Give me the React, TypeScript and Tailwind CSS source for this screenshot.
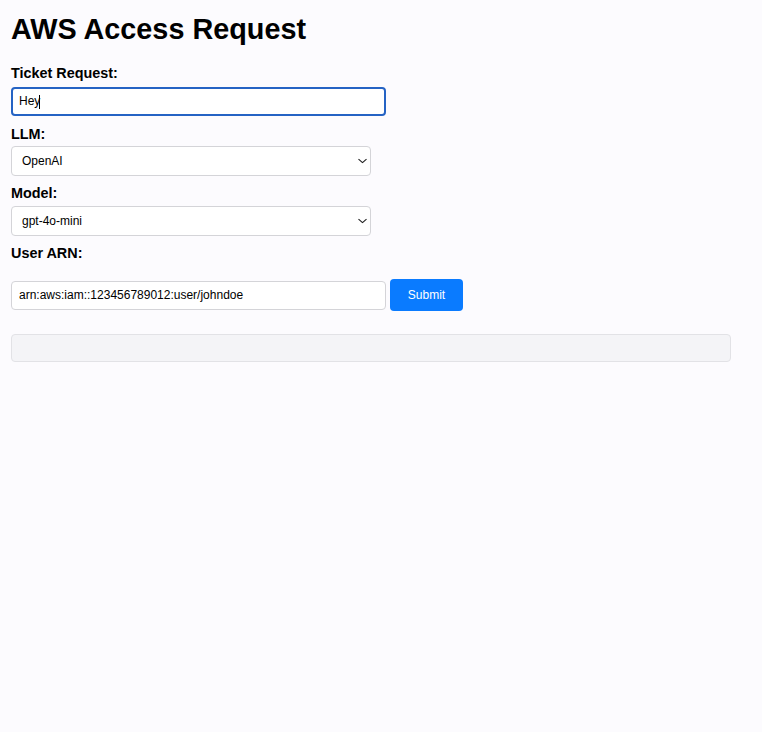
import React from 'react';

const Chevron = () => (
  <svg
    className="pointer-events-none absolute right-[4px] top-1/2 -translate-y-1/2"
    width="9"
    height="5"
    viewBox="0 0 9 5"
    fill="none"
  >
    <path d="M0.8 0.8l3.7 3.4 3.7-3.4" stroke="#222" strokeWidth="1.1" strokeLinecap="round" strokeLinejoin="round" />
  </svg>
);

const Label = ({ children, className = '' }: { children: React.ReactNode; className?: string }) => (
  <label className={`block h-[17px] text-[14.4px] leading-[17px] font-bold text-black ${className}`}>{children}</label>
);

const Select = ({ value, options, className = '' }: { value: string; options: string[]; className?: string }) => (
  <div className={`relative w-[360px] ${className}`}>
    <select
      defaultValue={value}
      className="block h-[30px] w-full appearance-none rounded-[4px] border border-[#d4d4d8] bg-white pl-[10px] pr-6 text-[12px] text-black outline-none"
    >
      {options.map((o) => (
        <option key={o}>{o}</option>
      ))}
    </select>
    <Chevron />
  </div>
);

export default function App() {
  return (
    <div className="min-h-screen bg-[#fcfbfe] px-[11px] pt-[13px] font-['Liberation_Sans',Arial,sans-serif] text-black">
      <h1 className="h-[33px] text-[28.8px] leading-[33px] font-bold">AWS Access Request</h1>

      {/* Ticket */}
      <Label className="mt-[18.5px]">Ticket Request:</Label>
      <div className="relative mt-[5px] w-[375px]">
        <input
          defaultValue="Hey"
          className="block h-[29px] w-full rounded-[4px] border-2 border-[#2563c4] bg-white px-[6px] text-[12px] text-black outline-none"
        />
        <span className="pointer-events-none absolute left-[28px] top-[8px] h-[14px] w-px bg-black" />
      </div>

      {/* LLM */}
      <Label className="mt-[10.5px]">LLM:</Label>
      <Select className="mt-[2.5px]" value="OpenAI" options={['OpenAI', 'Anthropic']} />

      {/* Model */}
      <Label className="mt-[9px]">Model:</Label>
      <Select className="mt-[4px]" value="gpt-4o-mini" options={['gpt-4o-mini', 'gpt-4o']} />

      {/* User ARN */}
      <Label className="mt-[9.5px]">User ARN:</Label>
      <div className="mt-[17px] flex items-center gap-[4px]">
        <input
          defaultValue="arn:aws:iam::123456789012:user/johndoe"
          className="block h-[29px] w-[375px] rounded-[4px] border border-[#d4d4d8] bg-white px-[7px] text-[12px] text-black outline-none"
        />
        <button className="h-[32px] w-[73px] rounded-[4px] bg-[#0a7bff] text-[12px] text-white">Submit</button>
      </div>

      {/* Response */}
      <div className="mt-[22.5px] h-[28px] w-[720px] rounded-[4px] border border-[#e2e2e6] bg-[#f4f4f7]" />
    </div>
  );
}
